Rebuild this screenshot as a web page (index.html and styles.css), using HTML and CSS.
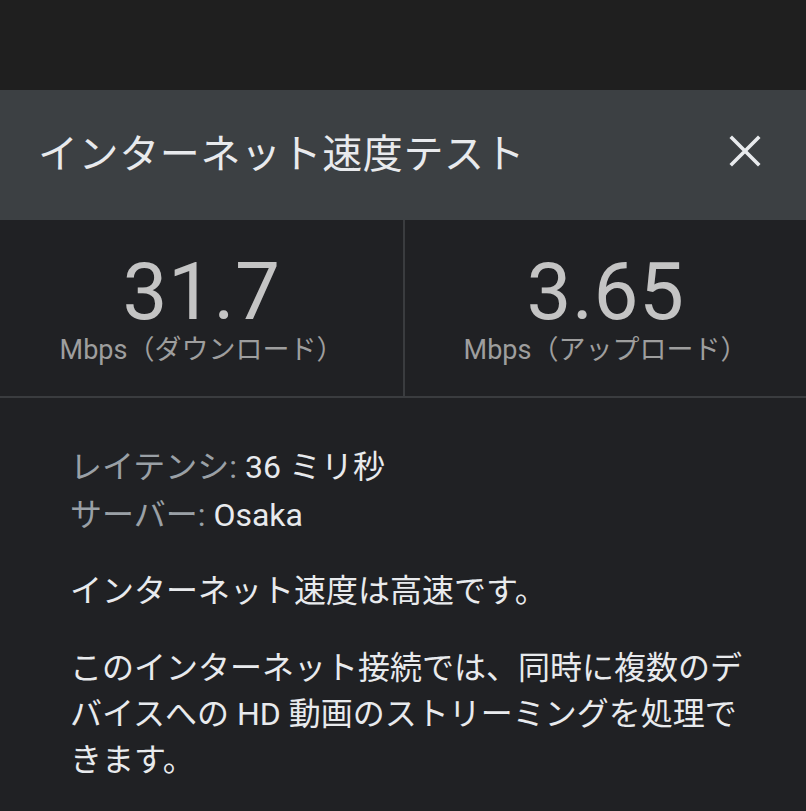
FILE: index.html
```html
<!DOCTYPE html>
<html lang="ja">
<head>
<meta charset="utf-8">
<title>インターネット速度テスト</title>
<link rel="stylesheet" href="styles.css">
</head>
<body>
<div class="topbar"></div>
<header class="header">
  <h1 class="title">インターネット速度テスト</h1>
  <button class="close" aria-label="閉じる">
    <svg width="32" height="32" viewBox="0 0 32 32"><path d="M3 3L29 29M29 3L3 29" stroke="#e8eaed" stroke-width="3.6" stroke-linecap="square" fill="none"/></svg>
  </button>
</header>
<section class="stats">
  <div class="stat">
    <div class="value">31.7</div>
    <div class="unit">Mbps（ダウンロード）</div>
  </div>
  <div class="stat">
    <div class="value">3.65</div>
    <div class="unit">Mbps（アップロード）</div>
  </div>
</section>
<section class="details">
  <div class="meta">
    <div class="row"><span class="label">レイテンシ:</span> 36 ミリ秒</div>
    <div class="row"><span class="label">サーバー:</span> Osaka</div>
  </div>
  <p class="summary">インターネット速度は高速です。</p>
  <p class="desc">このインターネット接続では、同時に複数のデバイスへの HD 動画のストリーミングを処理できます。</p>
</section>
</body>
</html>
```
FILE: styles.css
```css
html, body {
  margin: 0;
  padding: 0;
  background: #202124;
}
body {
  width: 806px;
  height: 811px;
  overflow: hidden;
  font-family: Roboto, "Noto Sans CJK JP", sans-serif;
  color: #e8eaed;
}
.topbar {
  height: 90px;
  background: #1f1f1f;
}
.header {
  height: 130px;
  box-sizing: border-box;
  background: #3c4043;
  display: flex;
  align-items: center;
  justify-content: space-between;
  padding: 0 45px 8px 38px;
}
.title {
  margin: 0;
  font-weight: 400;
  font-size: 40px;
  color: #e8eaed;
  letter-spacing: 0.6px;
}
.close {
  background: none;
  border: 0;
  padding: 0;
  width: 32px;
  height: 32px;
  display: flex;
}
.stats {
  display: grid;
  grid-template-columns: 1fr 1fr;
  height: 176px;
  border-bottom: 2px solid #3a3c3f;
}
.stat {
  display: flex;
  flex-direction: column;
  align-items: center;
  padding-top: 32px;
}
.stat + .stat {
  border-left: 2px solid #3a3c3f;
}
.value {
  font-size: 80px;
  font-weight: 400;
  line-height: 80px;
  color: #c4c4c4;
  letter-spacing: 0.5px;
}
.unit {
  font-size: 27px;
  line-height: 36px;
  color: #9e9e9e;
  margin-top: 0;
}
.details {
  padding: 45px 60px 0 70px;
  font-size: 32px;
}
.meta .row {
  line-height: 48px;
  color: #e8eaed;
}
.label {
  color: #9aa0a6;
}
.summary {
  margin: 28px 0 0;
  line-height: 48px;
}
.desc {
  margin: 30px 0 0;
  line-height: 46px;
}
```
